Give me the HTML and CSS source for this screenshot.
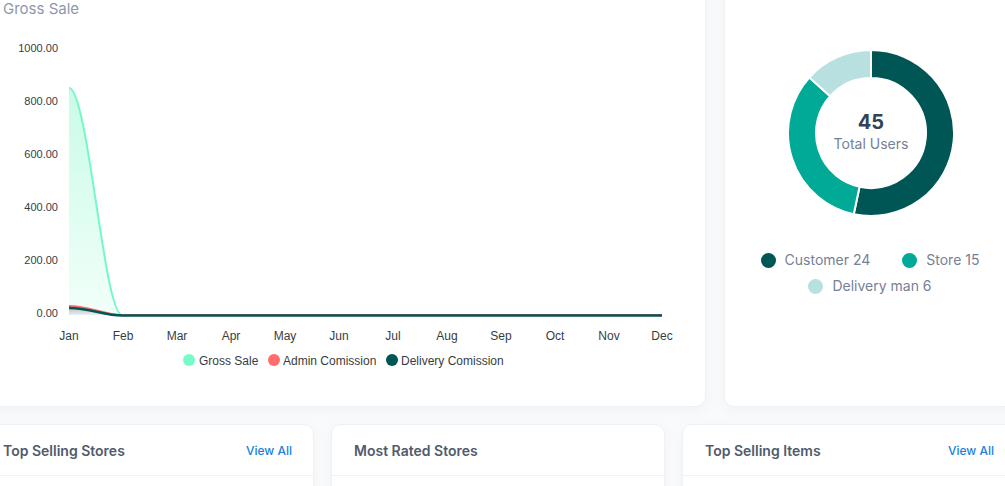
FILE: index.html
```html
<!DOCTYPE html>
<html lang="en">
<head>
<meta charset="utf-8">
<title>Dashboard</title>
<link rel="stylesheet" href="styles.css">
</head>
<body>
<div class="wrap">
  <div class="top-row">
    <section class="card chart-card">
      <div class="chart-title">Gross Sale</div>
      <svg class="chart" width="706" height="360" viewBox="0 18 706 360" xmlns="http://www.w3.org/2000/svg">
        <defs>
          <linearGradient id="gGross" x1="0" y1="0" x2="0" y2="1">
            <stop offset="0" stop-color="#c9fbe8"/>
            <stop offset="1" stop-color="#f1fff9"/>
          </linearGradient>
          <linearGradient id="gDel" x1="0" y1="0" x2="0" y2="1">
            <stop offset="0" stop-color="#9aa5a3"/>
            <stop offset="1" stop-color="#e8ecec"/>
          </linearGradient>
        </defs>
        <g class="ylab">
          <text x="58" y="52">1000.00</text>
          <text x="58" y="105">800.00</text>
          <text x="58" y="158">600.00</text>
          <text x="58" y="211">400.00</text>
          <text x="58" y="264">200.00</text>
          <text x="58" y="317">0.00</text>
        </g>
        <path d="M69,88 C88,88 104,315 122,315 L122,315 L69,315 Z" fill="url(#gGross)"/>
        <path d="M69,88 C88,88 104,315 122,315" fill="none" stroke="#74f9c6" stroke-width="2"/>
        <path d="M69,306 C90,306 104,315 122,315 L69,315 Z" fill="url(#gDel)" opacity="0.8"/>
        <path d="M69,306 C90,306 104,315 122,315 L662,315" fill="none" stroke="#ff6b6b" stroke-width="2"/>
        <path d="M69,308 C90,308 104,315.5 122,315.5 L662,315.5" fill="none" stroke="#005555" stroke-width="2.5"/>
        <g class="xlab">
          <text x="69" y="340">Jan</text>
          <text x="123" y="340">Feb</text>
          <text x="177" y="340">Mar</text>
          <text x="231" y="340">Apr</text>
          <text x="285" y="340">May</text>
          <text x="339" y="340">Jun</text>
          <text x="393" y="340">Jul</text>
          <text x="447" y="340">Aug</text>
          <text x="501" y="340">Sep</text>
          <text x="555" y="340">Oct</text>
          <text x="609" y="340">Nov</text>
          <text x="662" y="340">Dec</text>
        </g>
        <g class="leg">
          <circle cx="189" cy="360" r="6" fill="#77fcc9"/>
          <text x="199" y="364.5">Gross Sale</text>
          <circle cx="274" cy="360" r="6" fill="#ff6d6d"/>
          <text x="283" y="364.5">Admin Comission</text>
          <circle cx="392" cy="360" r="6" fill="#005555"/>
          <text x="401" y="364.5">Delivery Comission</text>
        </g>
      </svg>
    </section>
    <section class="card users-card">
      <div class="donut">
        <svg width="170" height="170" viewBox="-85 -85 170 170" xmlns="http://www.w3.org/2000/svg">
          <path d="M0,-83 A83,83 0 1 1 -17.26,81.18 L-11.44,53.80 A55,55 0 1 0 0,-55 Z" fill="#005555" stroke="#fff" stroke-width="2"/>
          <path d="M-17.26,81.18 A83,83 0 0 1 -61.68,-55.54 L-40.87,-36.80 A55,55 0 0 0 -11.44,53.80 Z" fill="#00aa96" stroke="#fff" stroke-width="2"/>
          <path d="M-61.68,-55.54 A83,83 0 0 1 0,-83 L0,-55 A55,55 0 0 0 -40.87,-36.80 Z" fill="#b9e0e0" stroke="#fff" stroke-width="2"/>
        </svg>
        <div class="donut-center">
          <div class="total">45</div>
          <div class="total-label">Total Users</div>
        </div>
      </div>
      <ul class="legend">
        <li><span class="dot dot-customer"></span>Customer 24</li>
        <li><span class="dot dot-store"></span>Store 15</li>
        <li><span class="dot dot-delivery"></span>Delivery man 6</li>
      </ul>
    </section>
  </div>
  <div class="bottom-row">
    <section class="card list-card">
      <header class="list-head"><h3>Top Selling Stores</h3><a class="view-all" href="#">View All</a></header>
    </section>
    <section class="card list-card">
      <header class="list-head"><h3>Most Rated Stores</h3></header>
    </section>
    <section class="card list-card">
      <header class="list-head"><h3>Top Selling Items</h3><a class="view-all" href="#">View All</a></header>
    </section>
  </div>
</div>
</body>
</html>
```
FILE: styles.css
```css
* { box-sizing: border-box; }
html, body {
  margin: 0;
  padding: 0;
  background: #f9fafb;
  overflow: hidden;
  height: 486px;
}
body {
  font-family: Inter, "Noto Sans", sans-serif;
}
.wrap {
  width: 1036px;
  margin: -40px 0 0 -20px;
  display: flex;
  flex-direction: column;
  gap: 17px;
}
.top-row {
  display: grid;
  grid-template-columns: 726px 292px;
  gap: 18px;
}
.card {
  background: #fff;
  border: 1px solid #f0f1f5;
  border-radius: 10px;
  box-shadow: 0 4px 12px rgba(140, 152, 164, 0.08);
}
.chart-card {
  height: 447px;
}
.chart-title {
  padding: 38px 0 0 22px;
  height: 57px;
  font-size: 15px;
  line-height: 20px;
  color: #8e97ac;
}
.chart {
  display: block;
  margin-left: 19px;
}
.ylab text {
  font-family: "Liberation Sans", Arial, sans-serif;
  font-size: 11px;
  fill: #373d3f;
  text-anchor: end;
}
.xlab text {
  font-family: "Liberation Sans", Arial, sans-serif;
  font-size: 12px;
  fill: #373d3f;
  text-anchor: middle;
}
.leg text {
  font-family: "Liberation Sans", Arial, sans-serif;
  font-size: 12px;
  fill: #373d3f;
}
.users-card {
  height: 447px;
  padding-top: 87px;
  display: flex;
  flex-direction: column;
  align-items: center;
}
.donut {
  position: relative;
  width: 170px;
  height: 170px;
  margin-left: 2px;
}
.donut svg { display: block; }
.donut-center {
  position: absolute;
  inset: 0;
  display: flex;
  flex-direction: column;
  align-items: center;
  justify-content: center;
  padding-bottom: 3px;
}
.total {
  font-size: 20px;
  font-weight: 700;
  color: #334257;
  line-height: 24px;
}
.total-label {
  font-size: 14px;
  color: #758196;
  line-height: 20px;
}
.legend {
  list-style: none;
  margin: 32px 0 0;
  padding: 0;
  width: 240px;
  display: flex;
  flex-wrap: wrap;
  justify-content: center;
  column-gap: 32px;
  row-gap: 6px;
}
.legend li {
  display: flex;
  align-items: center;
  gap: 9px;
  font-size: 14px;
  line-height: 20px;
  color: #758196;
}
.dot {
  width: 15px;
  height: 15px;
  border-radius: 50%;
  display: inline-block;
}
.dot-customer { background: #005555; }
.dot-store { background: #00aa96; }
.dot-delivery { background: #b9e0e0; }
.bottom-row {
  display: grid;
  grid-template-columns: repeat(3, 334px);
  gap: 17px;
}
.list-card {
  height: 120px;
}
.list-head {
  height: 51px;
  padding: 0 21px 0 22px;
  display: flex;
  align-items: center;
  justify-content: space-between;
  border-bottom: 1px solid #f1f2f5;
}
.list-head h3 {
  margin: 0;
  font-size: 14px;
  font-weight: 600;
  color: #505b6c;
}
.view-all {
  font-size: 12px;
  font-weight: 500;
  color: #1a7fe0;
  text-decoration: none;
}
```
